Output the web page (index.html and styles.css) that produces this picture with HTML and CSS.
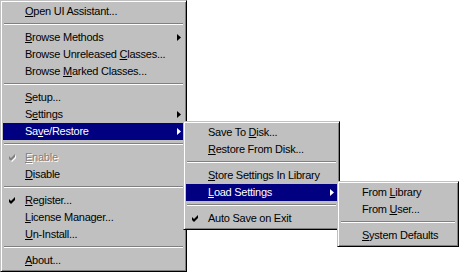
FILE: index.html
```html
<!DOCTYPE html>
<html lang="en">
<head>
    <meta charset="UTF-8">
    <title>Menu</title>
    <link rel="stylesheet" href="styles.css">
</head>
<body>
    <div class="desk">
        <!-- main menu -->
        <div class="menu menu-main">
            <div class="item"><span class="check"></span><span class="label"><u>O</u>pen UI Assistant...</span></div>
            <div class="sep"></div>
            <div class="item"><span class="check"></span><span class="label"><u>B</u>rowse Methods</span><svg class="arrow" width="4" height="7" viewBox="0 0 4 7"><polygon points="0,0 4,3.5 0,7"/></svg></div>
            <div class="item"><span class="check"></span><span class="label">Browse Unreleased <u>C</u>lasses...</span></div>
            <div class="item"><span class="check"></span><span class="label">Browse <u>M</u>arked Classes...</span></div>
            <div class="sep"></div>
            <div class="item"><span class="check"></span><span class="label"><u>S</u>etup...</span></div>
            <div class="item"><span class="check"></span><span class="label">S<u>e</u>ttings</span><svg class="arrow" width="4" height="7" viewBox="0 0 4 7"><polygon points="0,0 4,3.5 0,7"/></svg></div>
            <div class="item active"><span class="check"></span><span class="label">Sa<u>v</u>e/Restore</span><svg class="arrow" width="4" height="7" viewBox="0 0 4 7"><polygon points="0,0 4,3.5 0,7"/></svg></div>
            <div class="sep"></div>
            <div class="item disabled"><span class="check"><svg width="7" height="7" viewBox="0 0 7 7"><polygon points="0,2 2,4 6,0 6,3 2,7 0,5"/></svg></span><span class="label"><u>E</u>nable</span></div>
            <div class="item"><span class="check"></span><span class="label"><u>D</u>isable</span></div>
            <div class="sep"></div>
            <div class="item"><span class="check"><svg width="7" height="7" viewBox="0 0 7 7"><polygon points="0,2 2,4 6,0 6,3 2,7 0,5"/></svg></span><span class="label"><u>R</u>egister...</span></div>
            <div class="item"><span class="check"></span><span class="label"><u>L</u>icense Manager...</span></div>
            <div class="item"><span class="check"></span><span class="label"><u>U</u>n-Install...</span></div>
            <div class="sep"></div>
            <div class="item"><span class="check"></span><span class="label"><u>A</u>bout...</span></div>
        </div>

        <!-- Save/Restore submenu -->
        <div class="menu menu-save">
            <div class="item"><span class="check"></span><span class="label">Save To <u>D</u>isk...</span></div>
            <div class="item"><span class="check"></span><span class="label"><u>R</u>estore From Disk...</span></div>
            <div class="sep"></div>
            <div class="item"><span class="check"></span><span class="label"><u>S</u>tore Settings In Library</span></div>
            <div class="item active"><span class="check"></span><span class="label"><u>L</u>oad Settings</span><svg class="arrow" width="4" height="7" viewBox="0 0 4 7"><polygon points="0,0 4,3.5 0,7"/></svg></div>
            <div class="sep"></div>
            <div class="item"><span class="check"><svg width="7" height="7" viewBox="0 0 7 7"><polygon points="0,2 2,4 6,0 6,3 2,7 0,5"/></svg></span><span class="label">Auto Save on Exit</span></div>
        </div>

        <!-- Load Settings submenu -->
        <div class="menu menu-load">
            <div class="item"><span class="check"></span><span class="label">From <u>L</u>ibrary</span></div>
            <div class="item"><span class="check"></span><span class="label">From <u>U</u>ser...</span></div>
            <div class="sep"></div>
            <div class="item"><span class="check"></span><span class="label"><u>S</u>ystem Defaults</span></div>
        </div>
    </div>
</body>
</html>
```

FILE: styles.css
```css
* {
    margin: 0;
    padding: 0;
    box-sizing: border-box;
}

body {
    background: #fff;
    font-family: 'Liberation Sans', Arial, sans-serif;
    font-size: 11px;
    letter-spacing: -0.25px;
    color: #000;
}

.desk {
    position: relative;
    width: 462px;
    height: 274px;
    overflow: hidden;
}

/* popup menus lie over each other */
.menu {
    position: absolute;
    background: #c0c0c0;
    border: 1px solid;
    border-color: #c0c0c0 #000 #000 #c0c0c0;
    box-shadow: inset 1px 1px #fff, inset -1px -1px #808080;
    padding: 2px;
}

.menu-main {
    left: 0;
    top: 0;
    width: 187px;
}

.menu-save {
    left: 183px;
    top: 121px;
    width: 157px;
}

.menu-load {
    left: 337px;
    top: 181px;
    width: 122px;
}

.item {
    display: flex;
    align-items: center;
    height: 17px;
    padding: 0 3px 1px 6px;
    white-space: nowrap;
}

.check {
    width: 16px;
    display: flex;
    align-items: center;
}

.check svg {
    fill: #000;
}

.label {
    flex: 1;
}

.label u {
    text-underline-offset: 1px;
}

.arrow {
    fill: #000;
}

.item.active {
    background: #000080;
    color: #fff;
}

.item.active .arrow {
    fill: #fff;
}

.item.disabled {
    color: #808080;
    text-shadow: 1px 1px 0 #fff;
}

.item.disabled .check svg {
    fill: #808080;
    filter: drop-shadow(1px 1px 0 #fff);
}

.sep {
    height: 9px;
    padding: 3px 1px 4px;
}

.sep::before {
    content: '';
    display: block;
    border-top: 1px solid #808080;
    border-bottom: 1px solid #fff;
}
```
